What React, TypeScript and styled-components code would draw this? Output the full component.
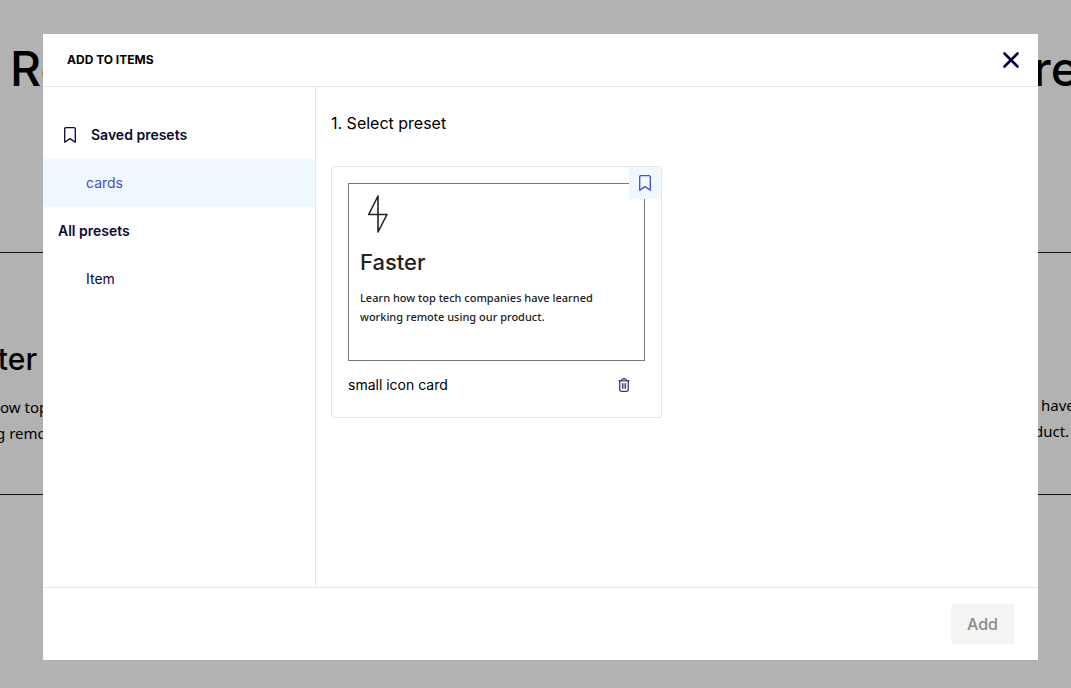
import React from "react";
import styled, { createGlobalStyle } from "styled-components";

const GlobalStyle = createGlobalStyle`
  *, *::before, *::after { box-sizing: border-box; }
  body {
    margin: 0;
    background: #b2b2b2;
    color: #000;
    font-family: Inter, "Liberation Sans", sans-serif;
  }
  h1, h2, h3, p { margin: 0; padding: 0; font-weight: 400; }
  button { font: inherit; border: 0; padding: 0; background: none; cursor: pointer; }
`;

const Page = styled.main`
  display: flex;
  justify-content: space-between;
  min-height: 100vh;
  overflow: hidden;
`;

const Column = styled.section<{ $width: number }>`
  width: ${(p) => p.$width}px;
  white-space: nowrap;
`;

const Hero = styled.h1<{ $indent: number }>`
  height: 252px;
  padding: 37px 0 0 ${(p) => p.$indent}px;
  font-size: 48px;
  line-height: 64px;
  font-weight: 500;
`;

const Feature = styled.article<{ $top: number }>`
  height: 243px;
  padding-top: ${(p) => p.$top}px;
  border: solid #111;
  border-width: 1px 0;
`;

const FeatureTitle = styled.h2`
  width: 37px;
  margin-bottom: 15px;
  display: flex;
  justify-content: flex-end;
  font-size: 30px;
  line-height: 40px;
  font-weight: 500;
`;

const FeatureText = styled.p<{ $indent?: number }>`
  font-family: "Noto Sans", sans-serif;
  font-size: 15px;
  line-height: 26px;
  text-indent: ${(p) => p.$indent ?? 0}px;
`;

const Dialog = styled.div`
  position: fixed;
  inset: 34px 33px 28px 43px;
  display: flex;
  flex-direction: column;
  background: #fff;
`;

const Header = styled.header`
  display: flex;
  align-items: center;
  justify-content: space-between;
  height: 53px;
  padding: 0 16px 0 24px;
  border-bottom: 1px solid #e6e6e6;
`;

const Title = styled.h2`
  font-size: 12px;
  line-height: 16px;
  font-weight: 700;
`;

const IconButton = styled.button`
  display: flex;
  align-items: center;
  justify-content: center;
  width: 22px;
  height: 24px;
  color: #05053a;
`;

const Body = styled.div`
  display: flex;
  flex: 1;
  min-height: 0;
`;

const Sidebar = styled.nav`
  width: 273px;
  flex-shrink: 0;
  padding-top: 24px;
  border-right: 1px solid #e6e6e6;
`;

const NavItem = styled.button<{ $level?: "group" | "child"; $active?: boolean }>`
  display: flex;
  align-items: center;
  gap: 15px;
  width: 100%;
  height: 48px;
  padding-left: ${(p) => (p.$level === "child" ? 43 : 15)}px;
  font-size: 14px;
  line-height: 24px;
  font-weight: ${(p) => (p.$level === "child" ? 400 : 600)};
  color: ${(p) => (p.$active ? "#4450c4" : "#0a0a2e")};
  background: ${(p) => (p.$active ? "#eff7ff" : "transparent")};
`;

const NavIcon = styled.span`
  display: flex;
  padding-left: 6px;
`;

const Content = styled.section`
  flex: 1;
  padding: 24px 15px;
  overflow: auto;
`;

const StepTitle = styled.h3`
  margin-bottom: 31px;
  font-size: 16px;
  line-height: 24px;
`;

const Card = styled.article`
  position: relative;
  width: 100%;
  max-width: 331px;
  padding: 16px 16px 20px;
  border: 1px solid #e6e6e6;
  border-radius: 3px;
`;

const Badge = styled.span`
  position: absolute;
  top: 0;
  right: 0;
  display: flex;
  align-items: center;
  justify-content: center;
  width: 32px;
  height: 32px;
  color: #4450c4;
  background: #eff7ff;
`;

const Preview = styled.div`
  height: 178px;
  padding: 11px;
  border: 1px solid #777;
  color: #222;
`;

const PreviewTitle = styled.h3`
  margin: 9px 0 10px;
  font-size: 22px;
  line-height: 32px;
  font-weight: 500;
`;

const PreviewText = styled.p`
  max-width: 250px;
  font-family: "Noto Sans", sans-serif;
  font-size: 11px;
  line-height: 19px;
  font-weight: 500;
`;

const CardFooter = styled.footer`
  display: flex;
  align-items: center;
  justify-content: space-between;
  margin-top: 12px;
  padding-right: 10px;
  font-size: 14px;
  line-height: 24px;
`;

const Actions = styled.footer`
  display: flex;
  justify-content: flex-end;
  padding: 16px 24px;
  border-top: 1px solid #e6e6e6;
`;

const AddButton = styled.button`
  height: 40px;
  padding: 0 16px;
  border-radius: 2px;
  font-size: 16px;
  line-height: 24px;
  font-weight: 500;
  color: #8c8c88;
  background: #f5f5f4;
`;

const BookmarkIcon = () => (
  <svg width="12" height="16" viewBox="0 0 12 16" fill="none" stroke="currentColor" strokeWidth="1.3" strokeLinejoin="round" aria-hidden="true">
    <path d="M.7 15.200V2Q.7.7 2 .7h8Q11.300.7 11.300 2v13.200L6 11.600z" />
  </svg>
);

const CloseIcon = () => (
  <svg width="18" height="18" viewBox="0 0 18 18" stroke="currentColor" strokeWidth="2.7" strokeLinecap="round" aria-hidden="true">
    <path d="M2.5 2.5l13 13M15.5 2.5l-13 13" />
  </svg>
);

const TrashIcon = () => (
  <svg width="12" height="14" viewBox="0 0 12 14" fill="none" stroke="currentColor" aria-hidden="true">
    <path d="M.5 2.8h11M4 2.5V1.4Q4 .8 4.6.8h2.8Q8 .8 8 1.4v1.1M1.8 3v9q0 1.3 1.3 1.3h5.8q1.3 0 1.3-1.3V3" />
    <path d="M4.4 5.2v5.6M6 5.2v5.6M7.6 5.2v5.6" strokeWidth=".8" />
  </svg>
);

const BoltIcon = () => (
  <svg width="36" height="38" viewBox="0 0 36 38" fill="none" stroke="currentColor" strokeWidth="1.6" strokeLinejoin="round" aria-hidden="true">
    <path d="M18 1L8.700 19.500H27L18 37z" />
  </svg>
);

export default function App() {
  return (
    <>
      <GlobalStyle />
      <Page>
        <Column $width={50}>
          <Hero $indent={10}>Re</Hero>
          <Feature $top={86}>
            <FeatureTitle>ter</FeatureTitle>
            <FeatureText>ow top</FeatureText>
            <FeatureText $indent={-4}>g remo</FeatureText>
          </Feature>
        </Column>
        <Column $width={40}>
          <Hero $indent={2}>re</Hero>
          <Feature $top={139}>
            <FeatureText $indent={10}>have</FeatureText>
            <FeatureText $indent={3}>duct.</FeatureText>
          </Feature>
        </Column>
      </Page>
      <Dialog role="dialog" aria-labelledby="dialog-title">
        <Header>
          <Title id="dialog-title">ADD TO ITEMS</Title>
          <IconButton type="button" aria-label="Close">
            <CloseIcon />
          </IconButton>
        </Header>
        <Body>
          <Sidebar>
            <NavItem type="button">
              <NavIcon>
                <BookmarkIcon />
              </NavIcon>
              Saved presets
            </NavItem>
            <NavItem type="button" $level="child" $active>
              cards
            </NavItem>
            <NavItem type="button">All presets</NavItem>
            <NavItem type="button" $level="child">
              Item
            </NavItem>
          </Sidebar>
          <Content>
            <StepTitle>1. Select preset</StepTitle>
            <Card>
              <Preview>
                <BoltIcon />
                <PreviewTitle>Faster</PreviewTitle>
                <PreviewText>Learn how top tech companies have learned working remote using our product.</PreviewText>
              </Preview>
              <Badge>
                <BookmarkIcon />
              </Badge>
              <CardFooter>
                small icon card
                <IconButton type="button" aria-label="Delete">
                  <TrashIcon />
                </IconButton>
              </CardFooter>
            </Card>
          </Content>
        </Body>
        <Actions>
          <AddButton type="button" disabled>
            Add
          </AddButton>
        </Actions>
      </Dialog>
    </>
  );
}
